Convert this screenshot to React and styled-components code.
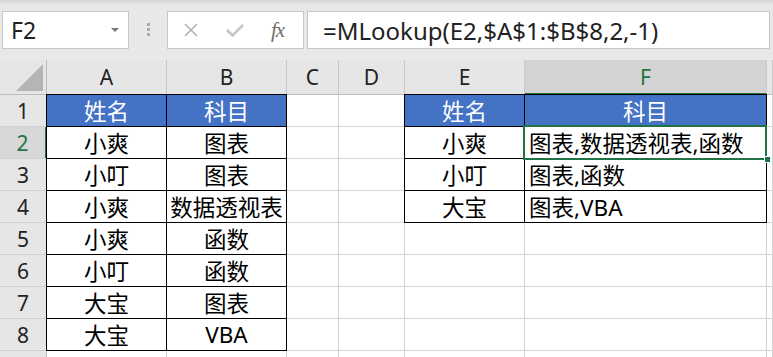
import React from 'react';
import styled, { createGlobalStyle, css } from 'styled-components';

const Global = createGlobalStyle`
  html, body { margin: 0; padding: 0; background: #fff; overflow: hidden; }
  body { font-family: "Noto Sans", "Noto Sans CJK SC", sans-serif; }
`;

const Page = styled.div`
  width: 773px;
  height: 357px;
  overflow: hidden;
`;

const Toolbar = styled.div`
  height: 60px;
  box-sizing: border-box;
  background: linear-gradient(#d6d6d6, #e8e8e8 5px, #e8e8e8);
  display: flex;
  align-items: flex-start;
  padding: 11px 3px 0 2px;
`;

const Box = styled.div`
  height: 38px;
  box-sizing: border-box;
  background: #fff;
  border: 1px solid #c6c6c6;
  display: flex;
  align-items: center;
`;

const NameBox = styled(Box)`
  width: 127px;
  justify-content: space-between;
  padding: 0 9px 0 8px;
  font-size: 23px;
  color: #222;
`;

const Arrow = styled.span`
  width: 0;
  height: 0;
  border-left: 4px solid transparent;
  border-right: 4px solid transparent;
  border-top: 4px solid #7a7a7a;
`;

const Grip = styled.div`
  width: 38px;
  display: flex;
  flex-direction: column;
  align-items: center;
  gap: 2px;
  padding-top: 12px;
`;

const Dot = styled.span`
  width: 3px;
  height: 3px;
  background: #a9a9a9;
`;

const IconBox = styled(Box)`
  width: 137px;
  padding-left: 11px;
  gap: 20px;
`;

const IconSlot = styled.span`
  width: 24px;
  display: flex;
  justify-content: center;
  align-items: center;
`;

const Fx = styled.span`
  font-family: "Liberation Serif", serif;
  font-style: italic;
  font-size: 21px;
  color: #6e6e6e;
  letter-spacing: -1px;
  margin-left: -3px;
`;

const FormulaBox = styled(Box)`
  flex: 1;
  margin-left: 3px;
  padding-left: 15px;
  font-size: 24px;
  color: #222;
  white-space: nowrap;
`;

const Sheet = styled.div`
  display: grid;
  grid-template-columns: 47px 120px 120px 52px 66px 120px 242px 1fr;
  grid-template-rows: 35px;
  grid-auto-rows: 32px;
  font-size: 22.5px;
`;

const Cell = styled.div`
  position: relative;
  box-sizing: border-box;
  border-right: 1px solid #d4d4d4;
  border-bottom: 1px solid #d4d4d4;
  display: flex;
  align-items: center;
  justify-content: ${p => (p.$align === 'left' ? 'flex-start' : 'center')};
  padding-left: ${p => (p.$align === 'left' ? '4px' : '0')};
  white-space: nowrap;
  color: #000;
  background: ${p => (p.$blue ? '#4472c4' : '#fff')};
  ${p => p.$blue && css`color: #fff;`}
  ${p => p.$boxed && css`
    &::before {
      content: '';
      position: absolute;
      left: -1px; top: -1px; right: -1px; bottom: -1px;
      border: 1px solid #000;
      pointer-events: none;
      z-index: 1;
    }
  `}
  ${p => p.$selected && css`
    &::after {
      content: '';
      position: absolute;
      left: -2px; top: -2px; right: -1px; bottom: -2px;
      border: 2px solid #217346;
      pointer-events: none;
      z-index: 2;
    }
  `}
`;

const Handle = styled.span`
  position: absolute;
  right: -5px;
  bottom: -5px;
  width: 5px;
  height: 5px;
  background: #217346;
  border: 1px solid #fff;
  z-index: 3;
`;

const ColHead = styled.div`
  box-sizing: border-box;
  background: ${p => (p.$active ? '#d3d3d3' : '#e6e6e6')};
  color: ${p => (p.$active ? '#217346' : '#222')};
  border-right: 1px solid #c8c8c8;
  border-bottom: ${p => (p.$active ? '2px solid #217346' : '1px solid #bdbdbd')};
  display: flex;
  align-items: center;
  justify-content: center;
  font-size: 21px;
  padding-top: ${p => (p.$active ? '1px' : '0')};
`;

const Corner = styled(ColHead)`
  align-items: flex-end;
  justify-content: flex-end;
  padding: 0 3px 3px 0;
  border-right: 1px solid #bdbdbd;
`;

const RowHead = styled.div`
  box-sizing: border-box;
  background: ${p => (p.$active ? '#d8d8d8' : '#e6e6e6')};
  color: ${p => (p.$active ? '#217346' : '#222')};
  border-right: ${p => (p.$active ? '2px solid #217346' : '1px solid #bdbdbd')};
  border-bottom: 1px solid #d0d0d0;
  display: flex;
  align-items: center;
  justify-content: center;
  font-size: 21px;
`;

const cols = ['A', 'B', 'C', 'D', 'E', 'F', 'G'];

const left = [
  ['姓名', '科目'],
  ['小爽', '图表'],
  ['小叮', '图表'],
  ['小爽', '数据透视表'],
  ['小爽', '函数'],
  ['小叮', '函数'],
  ['大宝', '图表'],
  ['大宝', 'VBA'],
];

const right = [
  ['姓名', '科目'],
  ['小爽', '图表,数据透视表,函数'],
  ['小叮', '图表,函数'],
  ['大宝', '图表,VBA'],
];

function Row({ n, label }) {
  const l = left[n - 1];
  const r = right[n - 1];
  const isHead = n === 1;
  return (
    <>
      <RowHead $active={n === 2}>{label}</RowHead>
      <Cell $boxed={!!l} $blue={l && isHead}>{l ? l[0] : ''}</Cell>
      <Cell $boxed={!!l} $blue={l && isHead}>{l ? l[1] : ''}</Cell>
      <Cell />
      <Cell />
      <Cell $boxed={!!r} $blue={r && isHead}>{r ? r[0] : ''}</Cell>
      <Cell
        $boxed={!!r}
        $blue={r && isHead}
        $align={r && !isHead ? 'left' : 'center'}
        $selected={n === 2}
      >
        {r ? r[1] : ''}
        {n === 2 && <Handle />}
      </Cell>
      <Cell />
    </>
  );
}

export default function App() {
  return (
    <Page>
      <Global />
      <Toolbar>
        <NameBox>
          <span>F2</span>
          <Arrow />
        </NameBox>
        <Grip>
          <Dot />
          <Dot />
          <Dot />
        </Grip>
        <IconBox>
          <IconSlot>
            <svg width="16" height="16" viewBox="0 0 16 16">
              <path d="M2 2 L14 14 M14 2 L2 14" stroke="#b3b3b3" strokeWidth="1.6" fill="none" />
            </svg>
          </IconSlot>
          <IconSlot>
            <svg width="20" height="16" viewBox="0 0 20 16">
              <path d="M2 8 L7.5 13.5 L18 3" stroke="#c4c4c4" strokeWidth="2.6" fill="none" />
            </svg>
          </IconSlot>
          <IconSlot>
            <Fx>fx</Fx>
          </IconSlot>
        </IconBox>
        <FormulaBox>=MLookup(E2,$A$1:$B$8,2,-1)</FormulaBox>
      </Toolbar>
      <Sheet>
        <Corner>
          <svg width="27" height="27" viewBox="0 0 27 27">
            <polygon points="27,0 27,27 0,27" fill="#b5b5b5" />
          </svg>
        </Corner>
        {cols.map(c => (
          <ColHead key={c} $active={c === 'F'}>{c === 'G' ? '' : c}</ColHead>
        ))}
        {[1, 2, 3, 4, 5, 6, 7, 8, 9].map(n => (
          <Row key={n} n={n} label={n < 9 ? n : ''} />
        ))}
      </Sheet>
    </Page>
  );
}
